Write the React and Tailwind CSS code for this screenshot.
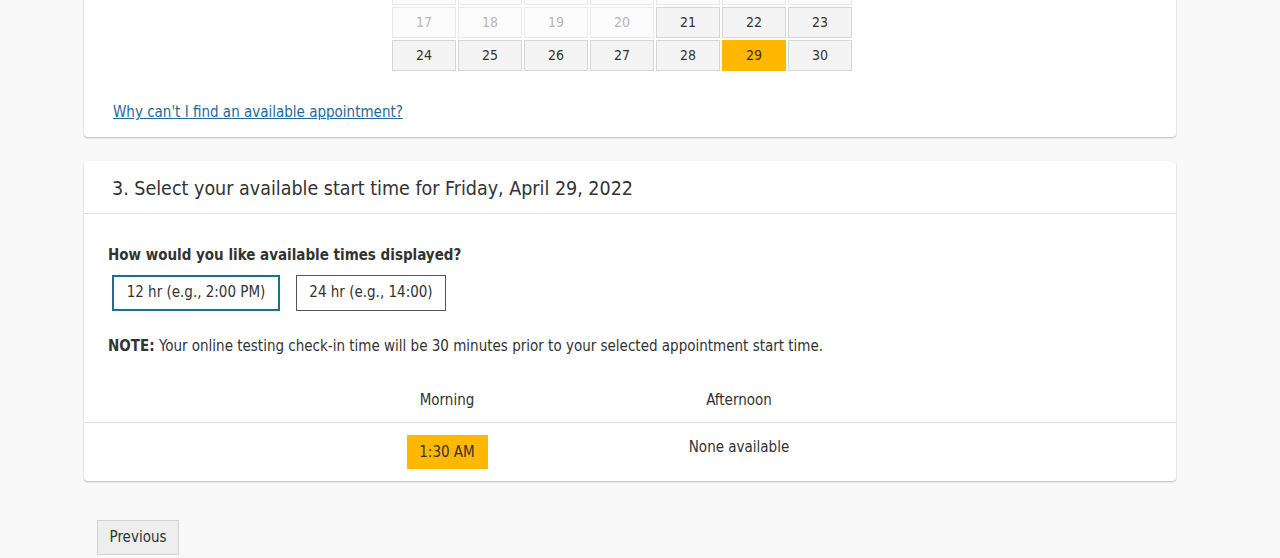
import React from 'react';

const font = { fontFamily: "Tahoma, 'DejaVu Sans Condensed', 'Liberation Sans', sans-serif" };

// April 2022, rows 3-5 of the month grid (row 3 sits mostly above the fold)
const rows = [
  [10, 11, 12, 13, 14, 15, 16].map((d) => ({ d, off: true })),
  [17, 18, 19, 20].map((d) => ({ d, off: true })).concat([21, 22, 23].map((d) => ({ d }))),
  [24, 25, 26, 27, 28].map((d) => ({ d })).concat([{ d: 29, sel: true }, { d: 30 }]),
];

const DayCell = ({ d, off, sel }) => {
  if (sel) {
    return (
      <div className="h-[31px] flex items-center justify-center bg-[#ffb700] border border-[#ffb700] text-[14px] text-[#333]">
        {d}
      </div>
    );
  }
  if (off) {
    return (
      <div className="h-[31px] flex items-center justify-center bg-[#fbfbfb] border border-[#e9e9e9] text-[14px] text-[#b8b8b8]">
        {d}
      </div>
    );
  }
  return (
    <div className="h-[31px] flex items-center justify-center bg-[#f4f4f4] border border-[#d6d6d6] text-[14px] text-[#333]">
      {d}
    </div>
  );
};

const App = () => {
  return (
    <div className="min-h-[558px] bg-[#f9f9f9] text-[#333] overflow-hidden" style={font}>
      <div className="w-[1092px] ml-[84px]">
        {/* step 2 card (scrolled) */}
        <div className="bg-white rounded-b-[4px] shadow-[0_1px_2px_rgba(0,0,0,0.25)] pb-[13px]">
          <div className="ml-[308px] w-[460px] grid grid-cols-7 gap-[2px] mt-[-26px]">
            {rows.flat().map((c) => (
              <DayCell key={c.d} {...c} />
            ))}
          </div>
          <div className="pl-[29px] mt-[29px]">
            <a href="#" className="text-[15px] text-[#1f6a99] underline">
              Why can't I find an available appointment?
            </a>
          </div>
        </div>

        {/* step 3 card */}
        <div className="bg-white rounded-[4px] shadow-[0_1px_2px_rgba(0,0,0,0.25)] mt-[24px]">
          <div className="h-[53px] flex items-center pl-[28px] pt-[3px] border-b border-[#e3e3e3]">
            <h2 className="text-[19.5px] text-[#333]">3. Select your available start time for Friday, April 29, 2022</h2>
          </div>
          <div className="px-[24px] pt-[30px]">
            <p className="text-[15px] font-bold text-[#333]">How would you like available times displayed?</p>
            <div className="flex gap-[16px] ml-[4px] mt-[8px]">
              <button className="h-[36px] w-[168px] bg-white border-2 border-[#1f6f8b] text-[15px] text-[#333]">
                12 hr (e.g., 2:00 PM)
              </button>
              <button className="h-[36px] w-[150px] bg-white border border-[#555] text-[15px] text-[#333]">
                24 hr (e.g., 14:00)
              </button>
            </div>
            <p className="text-[15px] mt-[24px]">
              <span className="font-bold">NOTE:</span> Your online testing check-in time will be 30 minutes prior to your
              selected appointment start time.
            </p>
          </div>
          <div className="mt-[21px]">
            <div className="grid grid-cols-[217px_292px_292px_1fr] h-[45px] items-center border-b border-[#dcdcdc] text-[15px]">
              <div />
              <div className="text-center">Morning</div>
              <div className="text-center">Afternoon</div>
              <div />
            </div>
            <div className="grid grid-cols-[217px_292px_292px_1fr] pt-[12px] pb-[12px] text-[15px]">
              <div />
              <div className="flex justify-center">
                <button className="h-[34px] w-[81px] bg-[#ffb700] text-[15px] text-[#333]">1:30 AM</button>
              </div>
              <div className="text-center pt-[1px]">None available</div>
              <div />
            </div>
          </div>
        </div>

        <div className="pt-[39px] pl-[13px]">
          <button className="h-[35px] w-[82px] bg-[#eeeeee] border border-[#d2d2d2] text-[15px] text-[#333]">
            Previous
          </button>
        </div>
      </div>
    </div>
  );
};

export default App;
